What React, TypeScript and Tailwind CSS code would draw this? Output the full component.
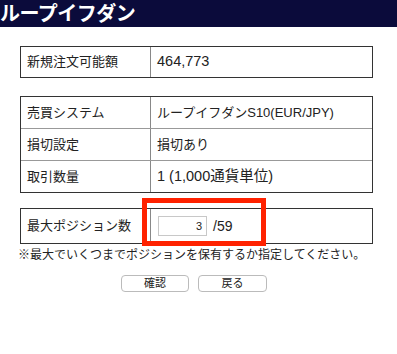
import React from 'react';

const font = { fontFamily: '"Liberation Sans", "Noto Sans CJK JP", sans-serif' };

const Row = ({ label, value, h, last, big }: { label: string; value: React.ReactNode; h: string; last?: boolean; big?: boolean }) => (
  <div className={`grid grid-cols-[130px_1fr] ${h} ${last ? '' : 'border-b border-[#999]'}`}>
    <div className="flex items-center pl-[6px] border-r border-[#888] text-[13px] text-[#222]">{label}</div>
    <div className={`flex items-center pl-[6px] text-[#222] ${big ? 'text-[14.5px]' : 'text-[13px]'}`}>{value}</div>
  </div>
);

export default function App() {
  return (
    <div className="w-[397px] h-[354px] bg-white overflow-hidden" style={font}>
      <div className="h-[27px] bg-[#0b0b3b] flex items-center">
        <h1 className="text-white font-bold text-[20px] leading-none tracking-[-0.5px]">ループイフダン</h1>
      </div>

      <div className="ml-[20px] w-[353px]">
        <div className="mt-[19px] border border-[#333]">
          <Row label="新規注文可能額" value="464,773" h="h-[30px]" last big />
        </div>

        <div className="mt-[18px] border border-[#333]">
          <Row label="売買システム" value="ループイフダンS10(EUR/JPY)" h="h-[32px]" />
          <Row label="損切設定" value="損切あり" h="h-[32px]" />
          <Row label="取引数量" value="1 (1,000通貨単位)" h="h-[31px]" last big />
        </div>

        <div className="relative mt-[15px] border border-[#333]">
          <div className="grid grid-cols-[130px_1fr] h-[34px]">
            <div className="flex items-center pl-[6px] border-r border-[#888] text-[13px] text-[#222]">最大ポジション数</div>
            <div className="flex items-center pl-[7px] gap-[6px]">
              <div className="w-[49px] h-[20px] border border-[#c8c8c8] flex items-center justify-end pr-[4px] text-[11px] text-[#222]">3</div>
              <span className="text-[14px] text-[#222]">/59</span>
            </div>
          </div>
          <div className="absolute left-[121px] top-[-11px] w-[124px] h-[48px] border-[5px] border-[#ff2200]" />
        </div>
      </div>

      <p className="ml-[18px] mt-[3px] text-[12px] leading-[16px] text-[#222]">
        ※最大でいくつまでポジションを保有するか指定してください。
      </p>

      <div className="flex justify-center gap-[9px] mt-[12px] pr-[9px]">
        <button className="w-[68px] h-[17px] rounded-[4px] border border-[#bbb] bg-white text-[11px] leading-none text-[#222]">確認</button>
        <button className="w-[69px] h-[17px] rounded-[4px] border border-[#bbb] bg-white text-[11px] leading-none text-[#222]">戻る</button>
      </div>
    </div>
  );
}
